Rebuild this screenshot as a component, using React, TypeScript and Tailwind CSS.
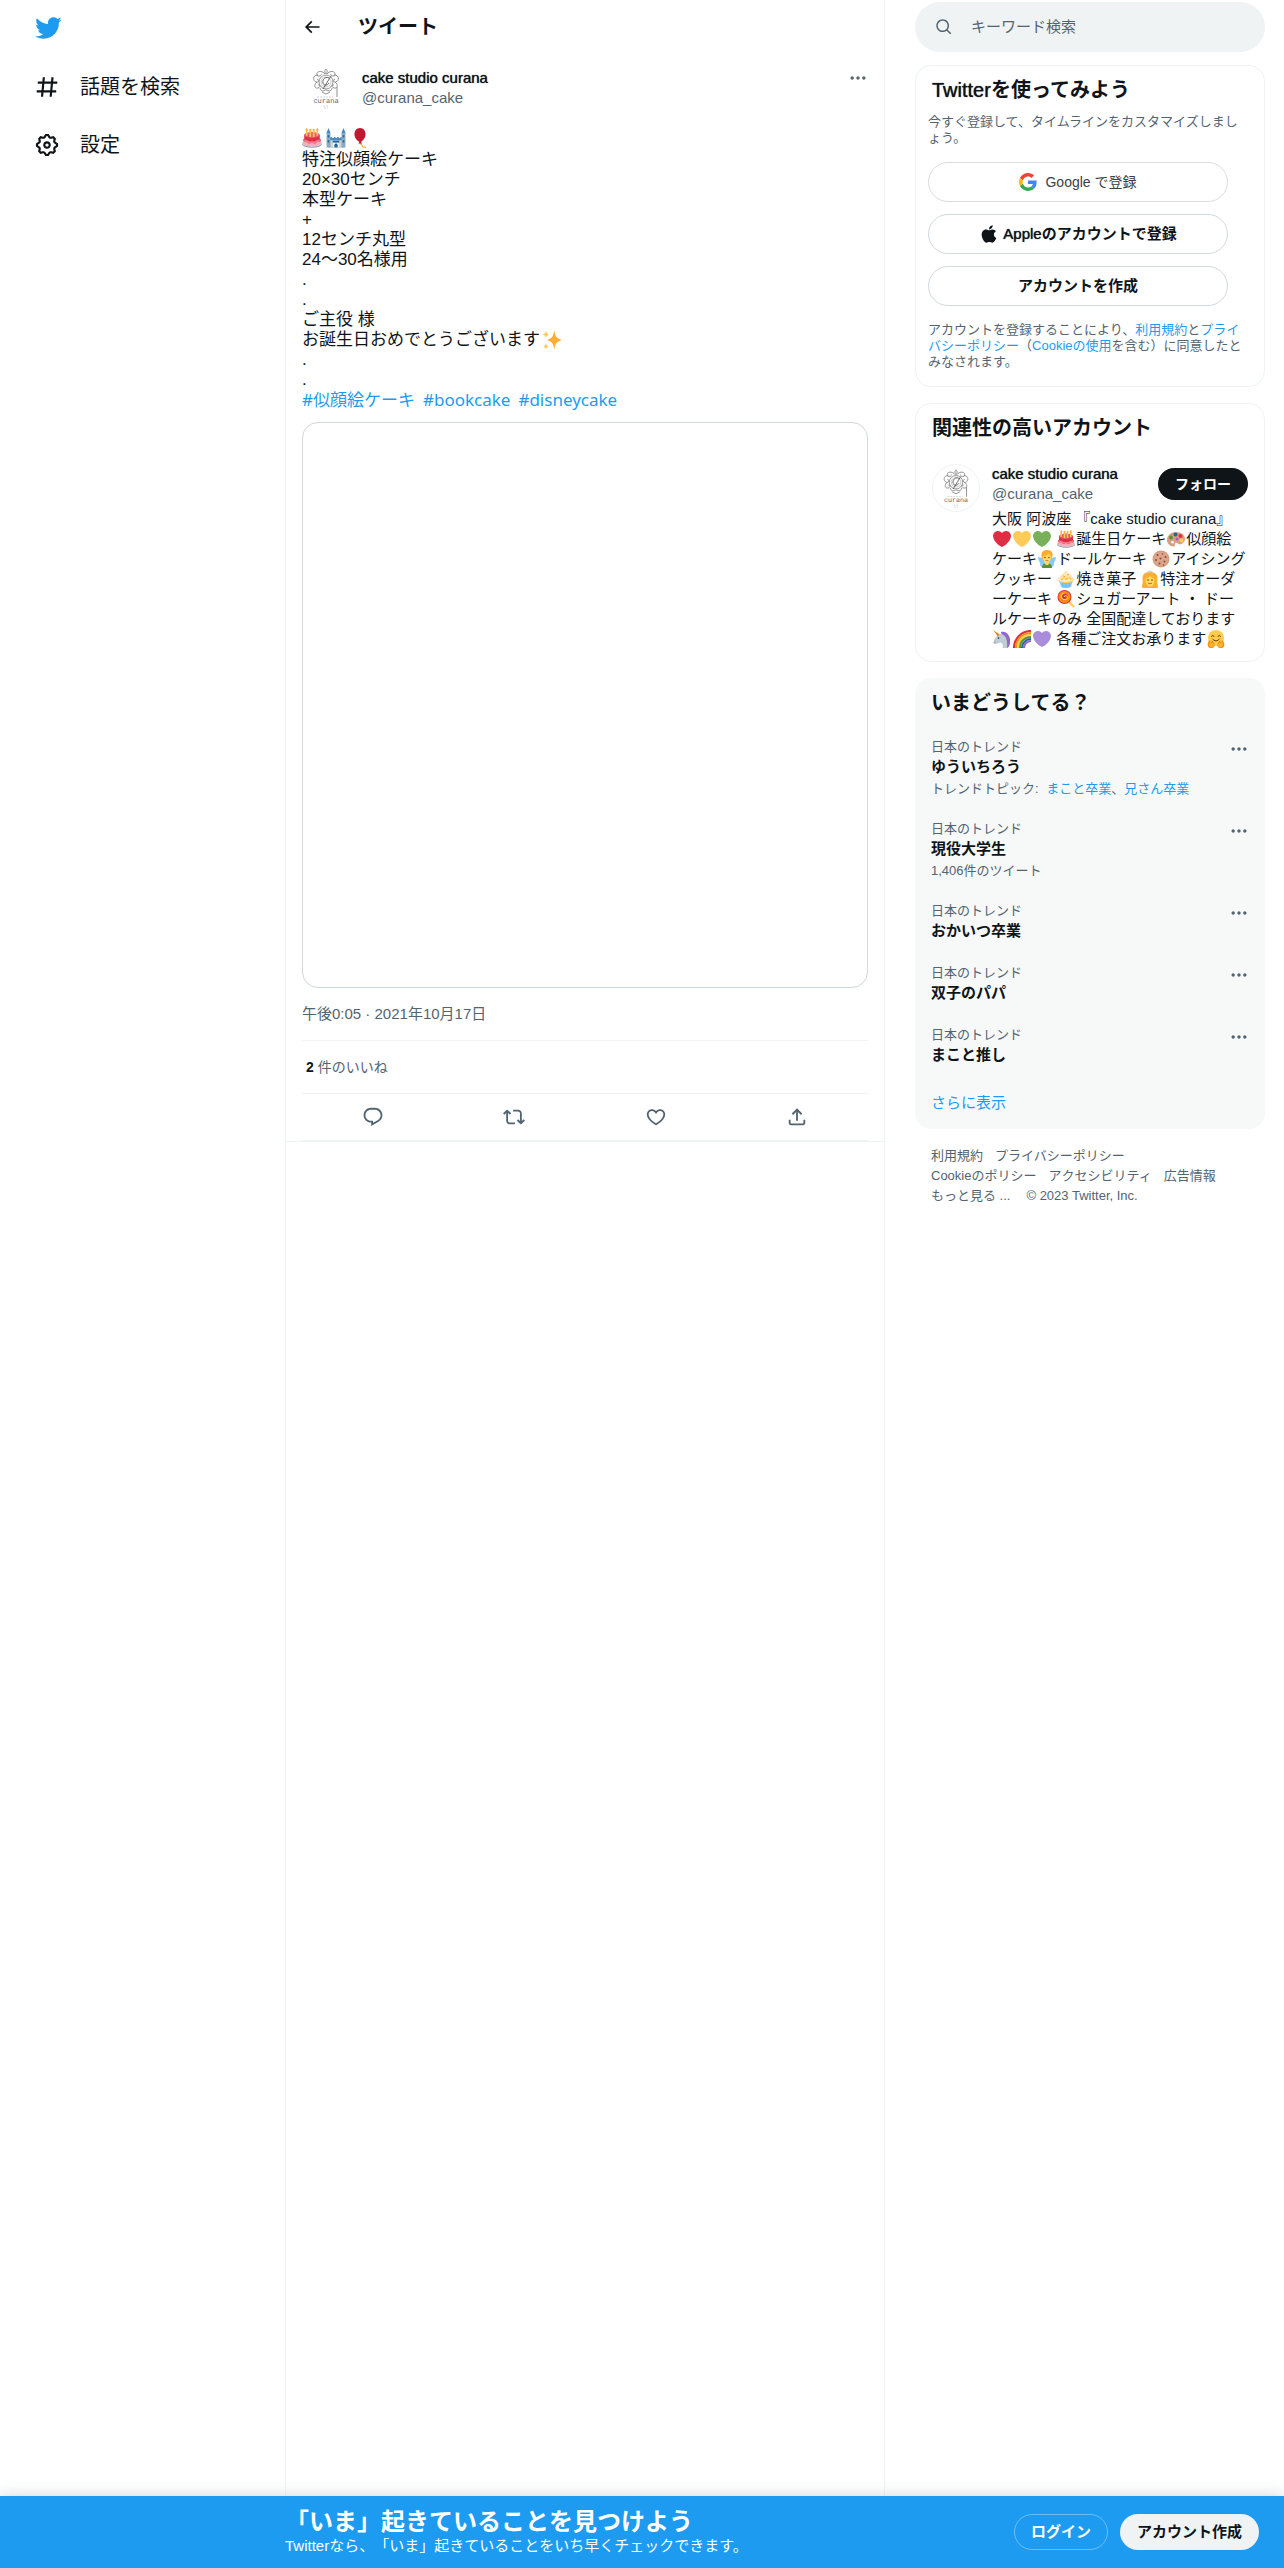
import type { ReactNode } from 'react'
import { FaApple } from 'react-icons/fa'

const ICONS = {
  bird: 'M23.643 4.937c-.835.37-1.732.62-2.675.733.962-.576 1.7-1.49 2.048-2.578-.9.534-1.897.922-2.958 1.13-.85-.904-2.06-1.47-3.4-1.47-2.572 0-4.658 2.086-4.658 4.66 0 .364.042.718.12 1.06-3.873-.195-7.304-2.05-9.602-4.868-.4.69-.63 1.49-.63 2.342 0 1.616.823 3.043 2.072 3.878-.764-.025-1.482-.234-2.11-.583v.06c0 2.257 1.605 4.14 3.737 4.568-.392.106-.803.162-1.227.162-.3 0-.593-.028-.877-.082.593 1.85 2.313 3.198 4.352 3.234-1.595 1.25-3.604 1.995-5.786 1.995-.376 0-.747-.022-1.112-.065 2.062 1.323 4.51 2.093 7.14 2.093 8.57 0 13.255-7.098 13.255-13.254 0-.2-.005-.402-.014-.602.91-.658 1.7-1.477 2.323-2.41z',
  hash: 'M10.09 3.098L9.72 7h5.99l.39-4.089 1.99.187L17.72 7h3.78v2h-3.97l-.56 6h3.53v2h-3.72l-.38 4.089-1.99-.187.36-3.902H8.78l-.38 4.089-1.99-.187L6.77 17H2.5v-2h4.46l.56-6H3.5V7h4.21l.39-4.089 1.99.187zM14.96 15l.56-6H9.53l-.56 6h5.99z',
  gear: 'M10.54 1.75h2.92l1.57 2.36c.11.17.32.25.53.21l2.53-.59 2.17 2.17-.58 2.54c-.05.2.04.41.21.53l2.36 1.57v2.92l-2.36 1.57c-.17.12-.26.33-.21.53l.58 2.54-2.17 2.17-2.53-.59c-.21-.04-.42.04-.53.21l-1.57 2.36h-2.92l-1.58-2.36c-.11-.17-.32-.25-.52-.21l-2.54.59-2.17-2.17.58-2.54c.05-.2-.03-.41-.21-.53l-2.35-1.57v-2.92L4.1 8.97c.18-.12.26-.33.21-.53L3.73 5.9 5.9 3.73l2.54.59c.2.04.41-.04.52-.21l1.58-2.36zm1.07 2l-.98 1.47C10.05 6.08 9 6.5 7.99 6.27l-1.46-.34-.6.6.33 1.46c.24 1.01-.18 2.07-1.05 2.64l-1.46.98v.78l1.46.98c.87.57 1.29 1.63 1.05 2.64l-.33 1.46.6.6 1.46-.34c1.01-.23 2.06.19 2.64 1.05l.98 1.47h.78l.97-1.47c.58-.86 1.63-1.28 2.65-1.05l1.45.34.61-.6-.34-1.46c-.23-1.01.18-2.07 1.05-2.64l1.47-.98v-.78l-1.47-.98c-.87-.57-1.28-1.63-1.05-2.64l.34-1.46-.61-.6-1.45.34c-1.02.23-2.07-.19-2.65-1.05l-.97-1.47h-.78zM12 10.5c-.83 0-1.5.67-1.5 1.5s.67 1.5 1.5 1.5c.82 0 1.5-.67 1.5-1.5s-.68-1.5-1.5-1.5zM8.5 12c0-1.93 1.56-3.5 3.5-3.5 1.93 0 3.5 1.57 3.5 3.5s-1.57 3.5-3.5 3.5c-1.94 0-3.5-1.57-3.5-3.5z',
  back: 'M7.414 13l5.043 5.04-1.414 1.42L3.586 12l7.457-7.46 1.414 1.42L7.414 11H21v2H7.414z',
  more: 'M3 12c0-1.1.9-2 2-2s2 .9 2 2-.9 2-2 2-2-.9-2-2zm9 2c1.1 0 2-.9 2-2s-.9-2-2-2-2 .9-2 2 .9 2 2 2zm7 0c1.1 0 2-.9 2-2s-.9-2-2-2-2 .9-2 2 .9 2 2 2z',
  reply: 'M1.751 10c0-4.42 3.584-8 8.005-8h4.366c4.49 0 8.129 3.64 8.129 8.13 0 2.96-1.607 5.68-4.196 7.11l-8.054 4.46v-3.69h-.067c-4.49.1-8.183-3.51-8.183-8.01zm8.005-6c-3.317 0-6.005 2.69-6.005 6 0 3.37 2.77 6.08 6.138 6.01l.351-.01h1.761v2.3l5.087-2.81c1.951-1.08 3.163-3.13 3.163-5.36 0-3.39-2.744-6.13-6.129-6.13H9.756z',
  retweet: 'M4.5 3.88l4.432 4.14-1.364 1.46L5.5 7.55V16c0 1.1.896 2 2 2H13v2H7.5c-2.209 0-4-1.79-4-4V7.55L1.432 9.48.068 8.02 4.5 3.88zM16.5 6H11V4h5.5c2.209 0 4 1.79 4 4v8.45l2.068-1.93 1.364 1.46-4.432 4.14-4.432-4.14 1.364-1.46 2.068 1.93V8c0-1.1-.896-2-2-2z',
  like: 'M16.697 5.5c-1.222-.06-2.679.51-3.89 2.16l-.805 1.09-.806-1.09C9.984 6.01 8.526 5.44 7.304 5.5c-1.243.07-2.349.78-2.91 1.91-.552 1.12-.633 2.78.479 4.82 1.074 1.97 3.257 4.27 7.129 6.61 3.87-2.34 6.052-4.64 7.126-6.61 1.111-2.04 1.03-3.7.477-4.82-.561-1.13-1.666-1.84-2.908-1.91zm4.187 7.69c-1.351 2.48-4.001 5.12-8.379 7.67l-.503.3-.504-.3c-4.379-2.55-7.029-5.19-8.382-7.67-1.36-2.5-1.41-4.86-.514-6.67.887-1.79 2.647-2.91 4.601-3.01 1.651-.09 3.368.56 4.798 2.01 1.429-1.45 3.146-2.1 4.796-2.01 1.954.1 3.714 1.22 4.601 3.01.896 1.81.846 4.17-.514 6.67z',
  share: 'M12 2.59l5.7 5.7-1.41 1.42L13 6.41V16h-2V6.41l-3.3 3.3-1.41-1.42L12 2.59zM21 15l-.02 3.51c0 1.38-1.12 2.49-2.5 2.49H5.5C4.11 21 3 19.88 3 18.5V15h2v3.5c0 .28.22.5.5.5h12.98c.28 0 .5-.22.5-.5L19 15h2z',
  search: 'M10.25 3.75c-3.59 0-6.5 2.91-6.5 6.5s2.91 6.5 6.5 6.5c1.795 0 3.419-.726 4.596-1.904 1.178-1.177 1.904-2.801 1.904-4.596 0-3.59-2.91-6.5-6.5-6.5zm-8.5 6.5c0-4.694 3.806-8.5 8.5-8.5s8.5 3.806 8.5 8.5c0 1.986-.682 3.815-1.824 5.262l4.781 4.781-1.414 1.414-4.781-4.781c-1.447 1.142-3.276 1.824-5.262 1.824-4.694 0-8.5-3.806-8.5-8.5z',
}

const Icon = ({ name, className }: { name: keyof typeof ICONS; className: string }) => (
  <svg viewBox="0 0 24 24" fill="currentColor" aria-hidden="true" className={className}>
    <path d={ICONS[name]} />
  </svg>
)

const Heart = ({ color }: { color: string }) => (
  <path
    fill={color}
    d="M35.885 11.833c0-5.45-4.418-9.868-9.867-9.868-3.308 0-6.227 1.633-8.018 4.129-1.791-2.496-4.71-4.129-8.017-4.129-5.45 0-9.868 4.417-9.868 9.868 0 .772.098 1.52.266 2.241C1.751 22.587 11.216 31.568 18 34.034c6.783-2.466 16.249-11.447 17.617-19.959.17-.721.268-1.469.268-2.242z"
  />
)

const EMOJI: Record<string, ReactNode> = {
  '❤️': <Heart color="#DD2E44" />,
  '💛': <Heart color="#FDCB58" />,
  '💚': <Heart color="#78B159" />,
  '💜': <Heart color="#AA8DD8" />,
  '🎂': (
    <>
      <ellipse cx="18" cy="29" rx="18" ry="6.500" fill="#8899A6" />
      <ellipse cx="18" cy="27.500" rx="18" ry="6.500" fill="#CCD6DD" />
      <path fill="#F4ABBA" d="M2 21v6c0 3.300 7.200 6 16 6s16-2.700 16-6v-6z" />
      <path fill="#EA596E" d="M2 20c0 5 3 6 5 5s3 3 6 3 3-1 5-1 3 2 6 1 3-4 6-3 4-1 4-5z" />
      <path fill="#DD2E44" d="M4 12v9c0 3 6 5 14 5s14-2 14-5v-9z" />
      <path fill="#F4ABBA" d="M4 20c2 3 4 0 6 2s5 2 8 2 6 0 8-2 4 1 6-2v3c0 2-6 4-14 4S4 25 4 23z" opacity=".6" />
      <ellipse cx="18" cy="12.500" rx="14" ry="5.500" fill="#EA596E" />
      <path stroke="#FFCC4D" strokeWidth="3" d="M8.500 6v8M15 7v9M21 7v9M27.500 6v8" />
      <path stroke="#FFAC33" strokeWidth="3.500" strokeLinecap="round" d="M8.500 2v3M15 3v3M21 3v3M27.500 2v3" />
    </>
  ),
  '🏰': (
    <>
      <path fill="#8899A6" d="M4 18h28v17H4z" />
      <path fill="#8CAABD" d="M1 10h7v25H1zM28 10h7v25h-7z" />
      <path fill="#CCD6DD" d="M8 21h20v14H8z" />
      <path fill="#4289C1" d="M4.500 0 8.500 10h-8zM31.500 0l4 10h-8zM8 16h3v3h3v-3h3v3h3v-3h3v3h3v-3h2v6H8z" />
      <path fill="#226699" d="M3 13h3v4H3zM30 13h3v4h-3zM3 22h3v4H3zM30 22h3v4h-3zM12 23h12v3H12z" />
      <path fill="#FFF" d="M13 27h10v8H13z" />
      <path fill="#226699" d="M15 35v-4c0-4 6-4 6 0v4z" />
    </>
  ),
  '🎈': (
    <>
      <path fill="none" stroke="#FFAC33" strokeWidth="2" strokeLinecap="round" d="M18 25c-2 5 5 4 4 7s5 1 6 3" />
      <path fill="#BE1931" d="M28 11c0 7-5 12-8 14l2 3h-7l2-3C12 23 8 17 8 11 8 5 12 0 18 0s10 5 10 11z" />
    </>
  ),
  '✨': (
    <>
      <path fill="#FFAC33" d="M22 1c2 10 3 14 14 17-11 3-12 7-14 17-2-10-3-14-13-17 10-3 11-7 13-17z" />
      <path fill="#FFCC4D" d="M7 1c1 5 2 6 6 7-4 1-5 2-6 7C6 10 5 9 1 8c4-1 5-2 6-7zM7 24c1 4 2 5 5 6-3 1-4 1-5 5-1-4-2-4-5-5 3-1 4-2 5-6z" />
    </>
  ),
  '🎨': (
    <>
      <path fill="#D99E82" d="M18 4C8 4 0 11 0 20c0 7 6 13 13 13 5 0 1-5 4-7s6 5 12 2c4-2 7-6 7-10C36 10 28 4 18 4zM12 27c-4 0-5-4-2-5s6 4 2 5z" />
      <circle cx="8" cy="15" r="4" fill="#5C913B" />
      <circle cx="17" cy="9" r="4" fill="#226699" />
      <circle cx="27" cy="12" r="4" fill="#DD2E44" />
      <circle cx="29" cy="21" r="4" fill="#FFCC4D" />
      <circle cx="20" cy="18" r="3" fill="#9268CA" />
    </>
  ),
  '🧚': (
    <>
      <path fill="#88C9F9" d="M0 14c9 0 14 6 14 12l-4 8C3 34 5 29 4 26S0 19 0 14zM36 14c-9 0-14 6-14 12l4 8c7 0 5-5 6-8s4-7 4-12z" />
      <path fill="#5C913B" d="M8 36c0-7 4-10 10-10s10 3 10 10z" />
      <path fill="#FFDC5D" d="M14 22h8v6c-2 3-6 3-8 0z" />
      <path fill="#FFAC33" d="M7 12C6 4 11 0 18 0s13 4 11 12l-2 7H9z" />
      <path fill="#FFDC5D" d="M10 12c5 0 9-2 11-5 1 3 3 5 5 5 0 8-3 13-8 13s-8-5-8-13z" />
      <circle cx="14" cy="15" r="1.300" fill="#662113" />
      <circle cx="22" cy="15" r="1.300" fill="#662113" />
      <path stroke="#C1694F" strokeWidth="1.500" d="M15 21h6" />
    </>
  ),
  '🍪': (
    <>
      <circle cx="18" cy="18" r="17" fill="#D99E82" />
      <circle cx="18" cy="18" r="14" fill="#DBA58C" />
      <g fill="#8A4B38">
        <circle cx="11" cy="10" r="2" />
        <circle cx="21" cy="8" r="1.500" />
        <circle cx="27" cy="14" r="2" />
        <circle cx="17" cy="17" r="2" />
        <circle cx="8" cy="20" r="2" />
        <circle cx="25" cy="23" r="2" />
        <circle cx="15" cy="27" r="2" />
        <circle cx="23" cy="30" r="1.500" />
      </g>
    </>
  ),
  '🧁': (
    <>
      <path fill="#88C9F9" d="M4 21h28l-4 12c-3 4-17 4-20 0z" />
      <path stroke="#55ACEE" strokeWidth="1.500" d="M11 25l1 9M18 25v10M25 25l-1 9" />
      <path fill="#FFE8B6" d="M2 22c-3-4 1-8 4-8 0-4 3-6 6-6 2-8 10-8 12 0 4 0 6 3 6 6 4 0 7 5 3 8-4 4-27 4-31 0z" />
      <path fill="none" stroke="#FFCC4D" strokeWidth="2" d="M4 22c8 4 20 4 28 0M9 14c5 3 13 3 18 0" />
      <path stroke="#F4900C" strokeWidth="1.800" strokeLinecap="round" d="M13 12l2 1M21 10l2-1M9 19l2-1M18 18h2M26 17l2 1" />
    </>
  ),
  '👸': (
    <>
      <path fill="#FFAC33" d="M3 36C0 32 5 27 3 19 2 9 8 4 18 4s16 5 15 15c-2 8 3 13 0 17z" />
      <path fill="#FFDC5D" d="M9 17c3 0 6-2 9-5 2 3 6 5 9 5 0 11-3 16-9 16S9 28 9 17z" />
      <path fill="#CCD6DD" d="M10 6c4-7 12-7 16 0-5-2-11-2-16 0z" />
      <circle cx="14" cy="20" r="1.500" fill="#662113" />
      <circle cx="22" cy="20" r="1.500" fill="#662113" />
      <path fill="none" stroke="#DF1F32" strokeWidth="1.500" d="M14 26c2 2 6 2 8 0" />
    </>
  ),
  '🍭': (
    <>
      <path stroke="#FFCC4D" strokeWidth="4" strokeLinecap="round" d="M21 21l12 12" />
      <circle cx="15" cy="14" r="14" fill="#DD2E44" />
      <circle cx="15" cy="14" r="9.500" fill="none" stroke="#F4900C" strokeWidth="5" />
      <path fill="none" stroke="#FFCC4D" strokeWidth="2.500" d="M15 14c0-4 6-3 6 1s-6 6-10 3-3-11 4-12" />
    </>
  ),
  '🦄': (
    <>
      <path fill="#9266CC" d="M16 4c10-3 20 7 18 22-1 6-3 9-6 10l-8-13z" />
      <path fill="#C1CDD5" d="M28 36c1-9 0-16-3-22-3-5-9-7-13-5L9 3v8C6 13 3 18 1 23c-2 4 3 7 7 4 4-2 6-2 9-1 3 2 3 6 2 10z" />
      <path fill="#EE7C0E" d="M0 0l13 9-3 4z" />
      <circle cx="11" cy="16" r="1.700" fill="#292F33" />
      <circle cx="4" cy="24" r="1.200" fill="#758795" />
    </>
  ),
  '🌈': (
    <g fill="none" strokeWidth="4.200">
      <path stroke="#DD2E44" d="M2 36C2 17 17 2 36 2" />
      <path stroke="#F4900C" d="M6 36C6 19 19 6 36 6" />
      <path stroke="#FFCC4D" d="M10 36c0-15 11-26 26-26" />
      <path stroke="#5C913B" d="M14 36c0-13 9-22 22-22" />
      <path stroke="#226699" d="M18 36c0-10 8-18 18-18" />
      <path stroke="#9266CC" d="M22 36c0-8 6-14 14-14" />
    </g>
  ),
  '🤗': (
    <>
      <circle cx="18" cy="16" r="16" fill="#FFCC4D" />
      <path fill="none" stroke="#664500" strokeWidth="2" strokeLinecap="round" d="M9 13c1-3 4-3 5 0M22 13c1-3 4-3 5 0" />
      <path fill="none" stroke="#664500" strokeWidth="2" strokeLinecap="round" d="M11 18c4 5 10 5 14 0" />
      <path fill="#F4900C" d="M3 23l3-3 2 4 4-3 1 4 2 3c2 6-4 9-9 8s-6-8-3-13zM33 23l-3-3-2 4-4-3-1 4-2 3c-2 6 4 9 9 8s6-8 3-13z" />
      <path fill="#FFCC4D" d="M5 25l2-2 2 4 3-1 2 4c0 4-4 5-7 4s-4-5-2-9zM31 25l-2-2-2 4-3-1-2 4c0 4 4 5 7 4s4-5 2-9z" opacity=".6" />
    </>
  ),
}

const Emoji = ({ char, large = false }: { char: string; large?: boolean }) => (
  <svg
    viewBox="0 0 36 36"
    role="img"
    aria-label={char}
    className={large ? 'mx-0.5 inline-block size-5 align-top' : 'mx-px inline-block size-[18px] align-[-4px]'}
  >
    {EMOJI[char]}
  </svg>
)

const Avatar = ({ bordered = false }: { bordered?: boolean }) => (
  <svg
    viewBox="0 0 48 48"
    aria-hidden="true"
    className={`size-12 shrink-0 rounded-full ${bordered ? 'border border-[#eff3f4]' : ''}`}
  >
    <g fill="none" stroke="#777" strokeWidth=".8">
      <circle cx="24" cy="18" r="7" />
      <circle cx="24" cy="18" r="5" strokeWidth=".4" />
      <path d="M27 14c-4-2-7 2-6 5s4 3 6 0M29 12l-8 13" stroke="#444" />
      <path d="M24 10c-2-2-1-4 0-5 1 1 2 3 0 5zM23 10c-3-4-9-3-8 1 1 2 5 1 4-1M25 10c3-4 9-3 8 1-1 2-5 1-4-1" />
      <path d="M16 11c-6 0-5 6-2 7s3-3 1-3M32 11c6 0 5 6 2 7s-3-3-1-3" />
      <path d="M15 18c-4 3-2 7 1 6s2-4 0-3M33 18c4 3 2 7-1 6s-2-4 0-3" />
      <path d="M18 24c1 5 5 2 6 2s5 3 6-2M20 28l4 2 4-2M35 23v10" />
    </g>
    <text x="24" y="39" textAnchor="middle" fontSize="7" fill="#666" fontFamily="Liberation Mono, monospace" textRendering="geometricPrecision">
      curana
    </text>
    <path stroke="#bbb" strokeWidth=".6" d="M15 33h16M21 42h6M22 44h4" strokeDasharray="2 1" />
  </svg>
)

const GoogleLogo = () => (
  <svg viewBox="0 0 48 48" aria-hidden="true" className="size-[18px]">
    <path fill="#EA4335" d="M24 9.500c3.540 0 6.710 1.220 9.210 3.600l6.850-6.850C35.900 2.380 30.470 0 24 0 14.620 0 6.510 5.380 2.560 13.220l7.980 6.190C12.430 13.720 17.740 9.500 24 9.500z" />
    <path fill="#4285F4" d="M46.980 24.550c0-1.570-.15-3.090-.38-4.550H24v9.020h12.940c-.58 2.960-2.260 5.480-4.780 7.180l7.730 6c4.510-4.180 7.090-10.360 7.090-17.650z" />
    <path fill="#FBBC05" d="M10.530 28.590c-.48-1.450-.76-2.990-.76-4.590s.27-3.140.76-4.590l-7.980-6.190C.92 16.460 0 20.120 0 24c0 3.880.92 7.540 2.560 10.780l7.970-6.190z" />
    <path fill="#34A853" d="M24 48c6.480 0 11.930-2.130 15.890-5.810l-7.730-6c-2.150 1.450-4.920 2.300-8.160 2.300-6.260 0-11.570-4.220-13.470-9.910l-7.980 6.190C6.510 42.620 14.620 48 24 48z" />
  </svg>
)

// Latin words inside bold text keep the regular face with a slightly heavier edge
const Strong = ({ children }: { children: ReactNode }) => (
  <span className="font-medium [text-shadow:0_0_1px_currentColor]">{children}</span>
)

const Link = ({ children }: { children: ReactNode }) => (
  <a href="#" className="text-[#1d9bf0]">
    {children}
  </a>
)

const NAV = [
  { icon: 'hash', label: '話題を検索' },
  { icon: 'gear', label: '設定' },
] as const

const ACTIONS = [
  { icon: 'reply', label: '返信' },
  { icon: 'retweet', label: 'リツイート' },
  { icon: 'like', label: 'いいね' },
  { icon: 'share', label: '共有' },
] as const

const TRENDS: { title: string; meta?: ReactNode }[] = [
  {
    title: 'ゆういちろう',
    meta: (
      <>
        トレンドトピック:{' '}
        <span className="ml-1">
          <Link>まこと卒業</Link>、<Link>兄さん卒業</Link>
        </span>
      </>
    ),
  },
  { title: '現役大学生', meta: '1,406件のツイート' },
  { title: 'おかいつ卒業' },
  { title: '双子のパパ' },
  { title: 'まこと推し' },
]

const FOOTER = [['利用規約', 'プライバシーポリシー'], ['Cookieのポリシー', 'アクセシビリティ', '広告情報']]

const Tweet = () => (
  <article className="border-b border-[#eff3f4] px-4 pt-[11px]">
    <div className="flex items-center gap-3">
      <Avatar />
      <div className="flex-1 text-[15px] leading-5">
        <div>
          <Strong>cake studio curana</Strong>
        </div>
        <div className="text-[#536471]">@curana_cake</div>
      </div>
      <button aria-label="もっと見る" className="-mt-5 text-[#536471]">
        <Icon name="more" className="size-5" />
      </button>
    </div>

    <div className="mt-4 text-[17px] leading-5">
      <div className="-ml-0.5 h-[22px]">
        <Emoji char="🎂" large />
        <Emoji char="🏰" large />
        <Emoji char="🎈" large />
      </div>
      <p className="whitespace-pre-line">
        {'特注似顔絵ケーキ\n20×30センチ\n本型ケーキ\n+\n12センチ丸型\n24〜30名様用\n.\n.\nご主役 様\nお誕生日おめでとうございます'}
        <Emoji char="✨" large />
        {'\n.\n.'}
      </p>
      <p className="flex gap-2 font-['Noto_Sans','Noto_Sans_CJK_JP',sans-serif]">
        <Link>#似顔絵ケーキ</Link>
        <Link>#bookcake</Link>
        <Link>#disneycake</Link>
      </p>
    </div>

    <div className="mt-3 aspect-square rounded-2xl border border-[#cfd9de]" />

    <div className="mt-4 text-[15px] leading-5 text-[#536471]">午後0:05 · 2021年10月17日</div>

    <div className="mt-4 border-y border-[#eff3f4] px-1 py-4 text-sm leading-5 text-[#536471]">
      <b className="text-[#0f1419]">2</b> 件のいいね
    </div>

    <div className="flex h-[47px] items-center border-b border-[#eff3f4] text-[#536471]">
      {ACTIONS.map(({ icon, label }) => (
        <button key={icon} aria-label={label} className="flex flex-1 justify-center">
          <Icon name={icon} className="size-[22px]" />
        </button>
      ))}
    </div>
  </article>
)

const SignUp = () => (
  <section className="rounded-2xl border border-[#eff3f4] px-3 pt-3 pb-4">
    <h2 className="px-1 text-xl leading-6 font-bold">
      <Strong>Twitter</Strong>を使ってみよう
    </h2>
    <p className="mt-3 text-[13px] leading-4 text-[#536471]">
      今すぐ登録して、タイムラインをカスタマイズしまし
      <br />
      ょう。
    </p>
    <div className="mt-4 flex max-w-[300px] flex-col gap-3 text-[15px] font-bold">
      <button className="flex h-10 items-center justify-center gap-2 rounded-full border border-[#dadce0] text-sm font-normal text-[#3c4043]">
        <GoogleLogo />
        Google で登録
      </button>
      <button className="flex h-10 items-center justify-center gap-1 rounded-full border border-[#cfd9de]">
        <FaApple className="size-5" />
        <span>
          <Strong>Apple</Strong>のアカウントで登録
        </span>
      </button>
      <button className="h-10 rounded-full border border-[#cfd9de]">アカウントを作成</button>
    </div>
    <p className="mt-4 text-[13px] leading-4 text-[#536471]">
      アカウントを登録することにより、<Link>利用規約</Link>と
      <Link>
        プライ
        <br />
        バシーポリシー
      </Link>
      （<Link>Cookieの使用</Link>を含む）に同意したと
      <br />
      みなされます。
    </p>
  </section>
)

const Relevant = () => (
  <section className="rounded-2xl border border-[#eff3f4] px-4 py-3">
    <h2 className="text-xl leading-6 font-bold">関連性の高いアカウント</h2>
    <div className="mt-6 flex gap-3 text-[15px] leading-5">
      <Avatar bordered />
      <div className="flex-1">
        <div className="flex items-center justify-between">
          <div>
            <div>
              <Strong>cake studio curana</Strong>
            </div>
            <div className="text-[#536471]">@curana_cake</div>
          </div>
          <button className="h-8 rounded-full bg-[#0f1419] px-[17px] text-sm font-bold text-white">フォロー</button>
        </div>
        <p className="mt-[5px] whitespace-nowrap">
          大阪 阿波座 『cake studio curana』
          <br />
          <Emoji char="❤️" />
          <Emoji char="💛" />
          <Emoji char="💚" /> <Emoji char="🎂" />
          誕生日ケーキ
          <Emoji char="🎨" />
          似顔絵
          <br />
          ケーキ
          <Emoji char="🧚" />
          ドールケーキ <Emoji char="🍪" />
          アイシング
          <br />
          クッキー <Emoji char="🧁" />
          焼き菓子 <Emoji char="👸" />
          特注オーダ
          <br />
          ーケーキ <Emoji char="🍭" />
          シュガーアート ・ ドー
          <br />
          ルケーキのみ 全国配達しております
          <br />
          <Emoji char="🦄" />
          <Emoji char="🌈" />
          <Emoji char="💜" /> 各種ご注文お承ります
          <Emoji char="🤗" />
        </p>
      </div>
    </div>
  </section>
)

const Trends = () => (
  <section className="rounded-2xl bg-[#f7f9f9] pt-[13px]">
    <h2 className="mb-3 px-4 text-xl leading-6 font-bold">いまどうしてる？</h2>
    {TRENDS.map(({ title, meta }) => (
      <div key={title} className="flex items-start justify-between px-4 py-3 text-[13px] leading-4 text-[#536471]">
        <div>
          <div>日本のトレンド</div>
          <div className="mt-0.5 text-[15px] leading-5 font-bold text-[#0f1419]">{title}</div>
          {meta && <div className="mt-1">{meta}</div>}
        </div>
        <button aria-label="もっと見る">
          <Icon name="more" className="size-5" />
        </button>
      </div>
    ))}
    <div className="p-4 text-[15px] leading-5">
      <Link>さらに表示</Link>
    </div>
  </section>
)

const Footer = () => (
  <footer className="space-y-1 px-4 pt-[3px] text-[13px] leading-4 text-[#536471]">
    {FOOTER.map((row) => (
      <div key={row[0]} className="flex gap-3">
        {row.map((item) => (
          <a key={item} href="#">
            {item}
          </a>
        ))}
      </div>
    ))}
    <div className="flex gap-4">
      <button>もっと見る ...</button>
      <span>© 2023 Twitter, Inc.</span>
    </div>
  </footer>
)

const App = () => (
  <div
    lang="ja"
    className="flex min-h-screen flex-col bg-white font-['Liberation_Sans','Noto_Sans_CJK_JP',sans-serif] text-[#0f1419] [text-spacing-trim:space-all]"
  >
    <div className="flex flex-1">
      {/* Navigation */}
      <header className="flex-1 pl-[34px]">
        <a href="#" aria-label="Twitter" className="flex h-14 items-center text-[#1d9bf0]">
          <Icon name="bird" className="size-7" />
        </a>
        <nav className="mt-0.5">
          {NAV.map(({ icon, label }) => (
            <a key={icon} href="#" className="flex h-[58px] items-center gap-5 text-xl">
              <Icon name={icon} className="size-[26px]" />
              {label}
            </a>
          ))}
        </nav>
      </header>

      {/* Timeline */}
      <main className="w-[600px] border-x border-[#eff3f4]">
        <div className="flex h-[53px] items-center gap-9 px-4">
          <button aria-label="戻る">
            <Icon name="back" className="size-5" />
          </button>
          <h1 className="text-xl font-bold">ツイート</h1>
        </div>
        <Tweet />
      </main>

      {/* Sidebar */}
      <aside className="mr-[19px] ml-[30px] flex w-[350px] flex-col gap-4 pt-0.5">
        <label className="-mb-[3px] flex h-[50px] items-center gap-[18px] rounded-full bg-[#eff3f4] px-5 text-[#536471]">
          <Icon name="search" className="size-[18px] shrink-0" />
          <input
            type="text"
            aria-label="キーワード検索"
            placeholder="キーワード検索"
            className="w-full bg-transparent text-[15px] outline-none placeholder:text-[#536471]"
          />
        </label>
        <SignUp />
        <Relevant />
        <Trends />
        <Footer />
      </aside>
    </div>

    {/* Login bar */}
    <div className="sticky bottom-0 flex h-[72px] bg-[#1d9bf0] text-white shadow-[0_0_15px_rgba(101,119,134,0.3)]">
      <div className="flex-1" />
      <div className="flex w-[999px] items-center gap-3 pr-[25px] text-[15px] font-bold">
        <div className="flex-1">
          <div className="text-2xl leading-7">「いま」起きていることを見つけよう</div>
          <div className="leading-5 font-normal">Twitterなら、「いま」起きていることをいち早くチェックできます。</div>
        </div>
        <button className="h-9 rounded-full border border-white/35 px-4">ログイン</button>
        <button className="h-9 rounded-full bg-[#eff3f4] px-[17px] text-[#0f1419]">アカウント作成</button>
      </div>
    </div>
  </div>
)

export default App
